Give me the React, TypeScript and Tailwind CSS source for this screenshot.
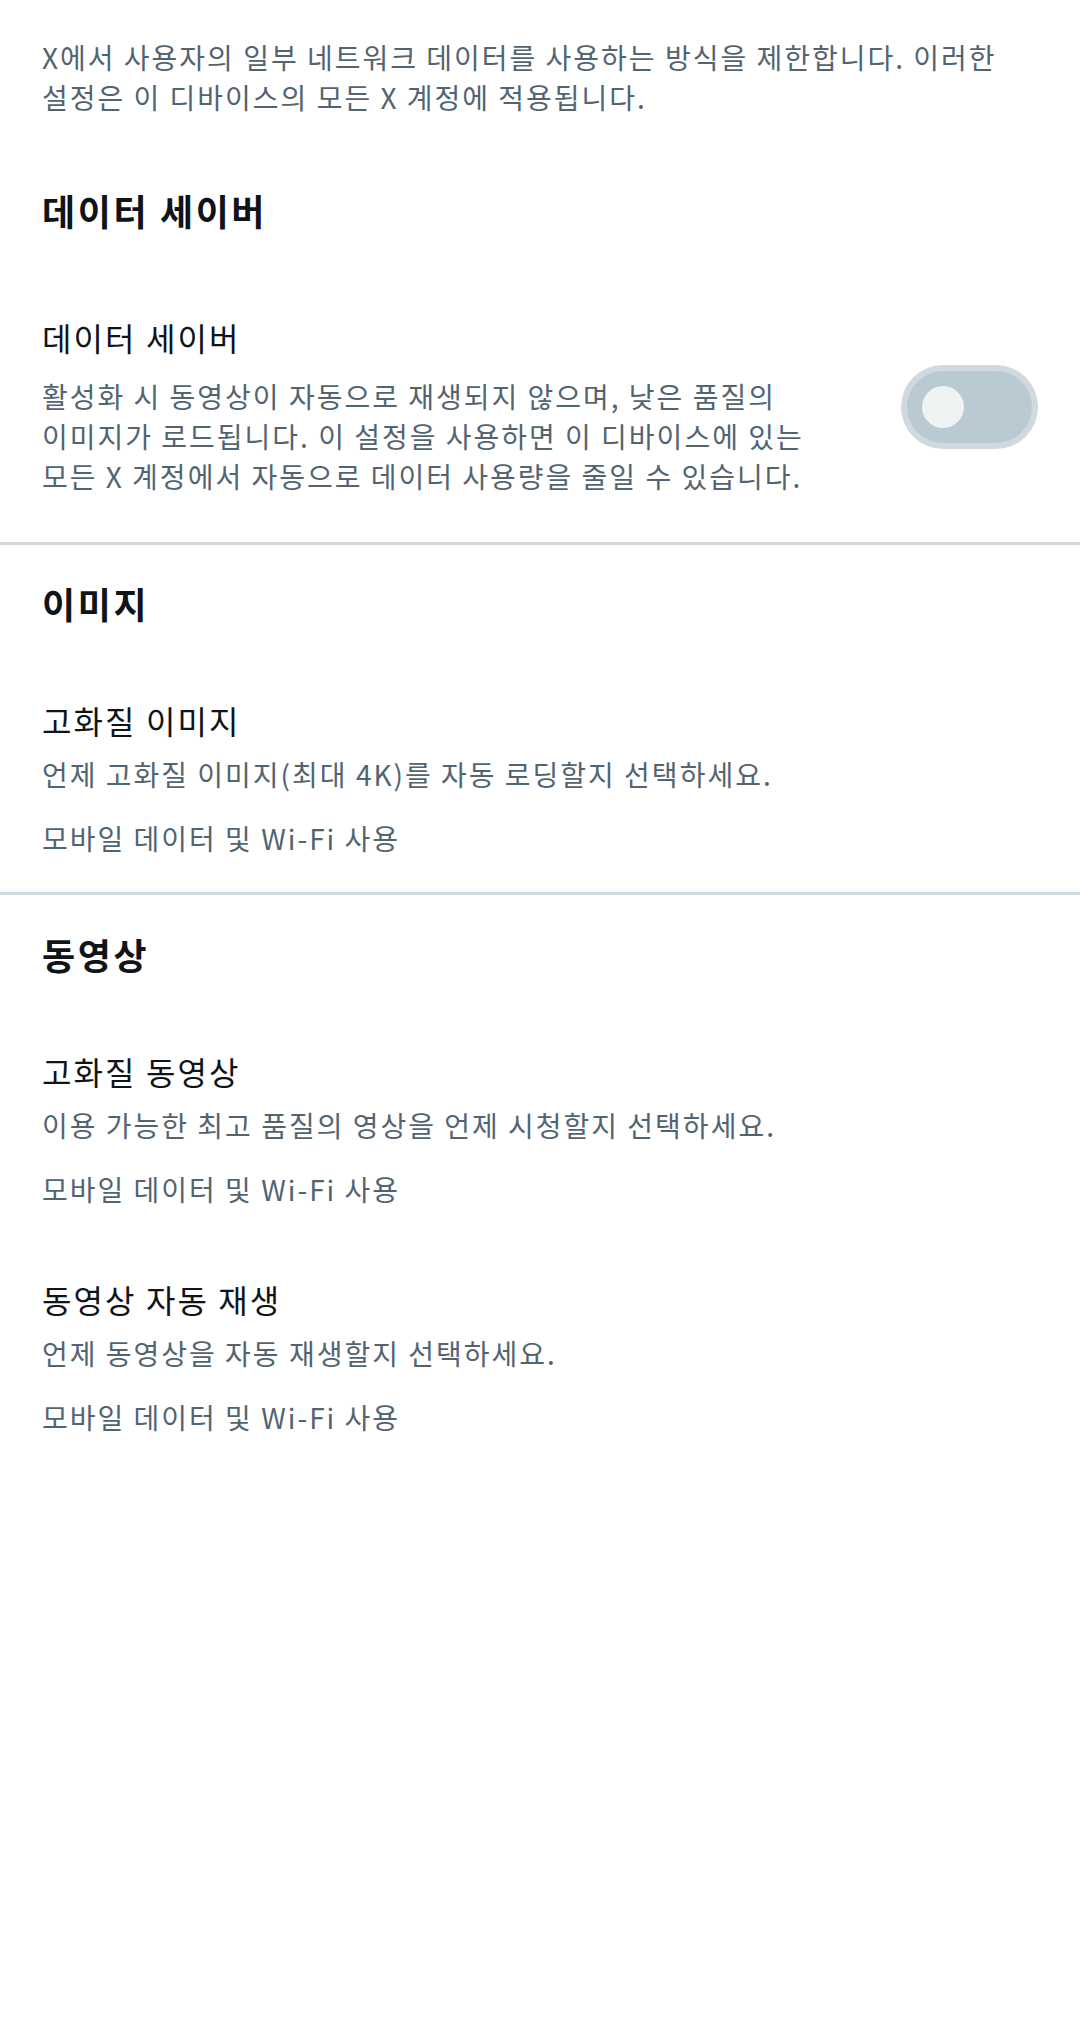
import { useState } from "react";

interface SettingItem {
  title: string;
  description: string;
  value: string;
}

const imageItems: SettingItem[] = [
  {
    title: "고화질 이미지",
    description: "언제 고화질 이미지(최대 4K)를 자동 로딩할지 선택하세요.",
    value: "모바일 데이터 및 Wi-Fi 사용",
  },
];

const videoItems: SettingItem[] = [
  {
    title: "고화질 동영상",
    description: "이용 가능한 최고 품질의 영상을 언제 시청할지 선택하세요.",
    value: "모바일 데이터 및 Wi-Fi 사용",
  },
  {
    title: "동영상 자동 재생",
    description: "언제 동영상을 자동 재생할지 선택하세요.",
    value: "모바일 데이터 및 Wi-Fi 사용",
  },
];

function SectionHeading({ children }: { children: string }) {
  return (
    <h2 className="px-[42px] text-[36px] font-bold leading-[44px] tracking-[2.6px] text-[#0f1419]">
      {children}
    </h2>
  );
}

function Divider() {
  return <div className="h-[3px] w-full bg-[#cfd9de]" />;
}

function ItemList({ items }: { items: SettingItem[] }) {
  return (
    <div className="flex flex-col gap-[70px] px-[42px]">
      {items.map((item, index) => (
        <div key={index}>
          <div className="text-[32px] leading-[40px] tracking-[2.1px] text-[#0f1419]">
            {item.title}
          </div>
          <div className="mt-[14px] text-[28px] leading-[40px] tracking-[2px] text-[#536471]">
            {item.description}
          </div>
          <div className="mt-[24px] text-[28px] leading-[40px] tracking-[2px] text-[#536471]">
            {item.value}
          </div>
        </div>
      ))}
    </div>
  );
}

export default function App() {
  const [dataSaver, setDataSaver] = useState(false);

  return (
    <div className="min-h-[2018px] w-full break-keep bg-white font-['Noto_Sans_CJK_KR','Noto_Sans',sans-serif]">
      <p className="pl-[42px] pr-[30px] pt-[37px] text-[28px] leading-[40px] tracking-[2px] text-[#536471]">
        X에서 사용자의 일부 네트워크 데이터를 사용하는 방식을 제한합니다. 이러한
        설정은 이 디바이스의 모든 X 계정에 적용됩니다.
      </p>

      {/* Data saver */}
      <div className="pt-[71px]">
        <SectionHeading>데이터 세이버</SectionHeading>
        <div className="flex items-center gap-[40px] px-[42px] pt-[85px] pb-[46px]">
          <div className="flex-1">
            <div className="text-[32px] leading-[40px] tracking-[2.1px] text-[#0f1419]">
              데이터 세이버
            </div>
            <div className="mt-[19px] pr-[30px] text-[28px] leading-[40px] tracking-[2px] text-[#536471]">
              활성화 시 동영상이 자동으로 재생되지 않으며, 낮은 품질의
              이미지가 로드됩니다. 이 설정을 사용하면 이 디바이스에 있는 모든
              X 계정에서 자동으로 데이터 사용량을 줄일 수 있습니다.
            </div>
          </div>
          <button
            onClick={() => setDataSaver(!dataSaver)}
            className="h-[84px] w-[137px] shrink-0 rounded-full bg-[#cfd9de] p-[6px]"
          >
            <div
              className={`flex h-full w-full items-center rounded-full px-[15px] ${
                dataSaver ? "justify-end bg-[#1d9bf0]" : "justify-start bg-[#b9cad3]"
              }`}
            >
              <div className="h-[42px] w-[42px] rounded-full bg-[#eff3f4]" />
            </div>
          </button>
        </div>
      </div>
      <Divider />

      {/* Images */}
      <div className="pt-[36px] pb-[34px]">
        <SectionHeading>이미지</SectionHeading>
        <div className="pt-[75px]">
          <ItemList items={imageItems} />
        </div>
      </div>
      <Divider />

      {/* Videos */}
      <div className="pt-[37px] pb-[34px]">
        <SectionHeading>동영상</SectionHeading>
        <div className="pt-[75px]">
          <ItemList items={videoItems} />
        </div>
      </div>
    </div>
  );
}
